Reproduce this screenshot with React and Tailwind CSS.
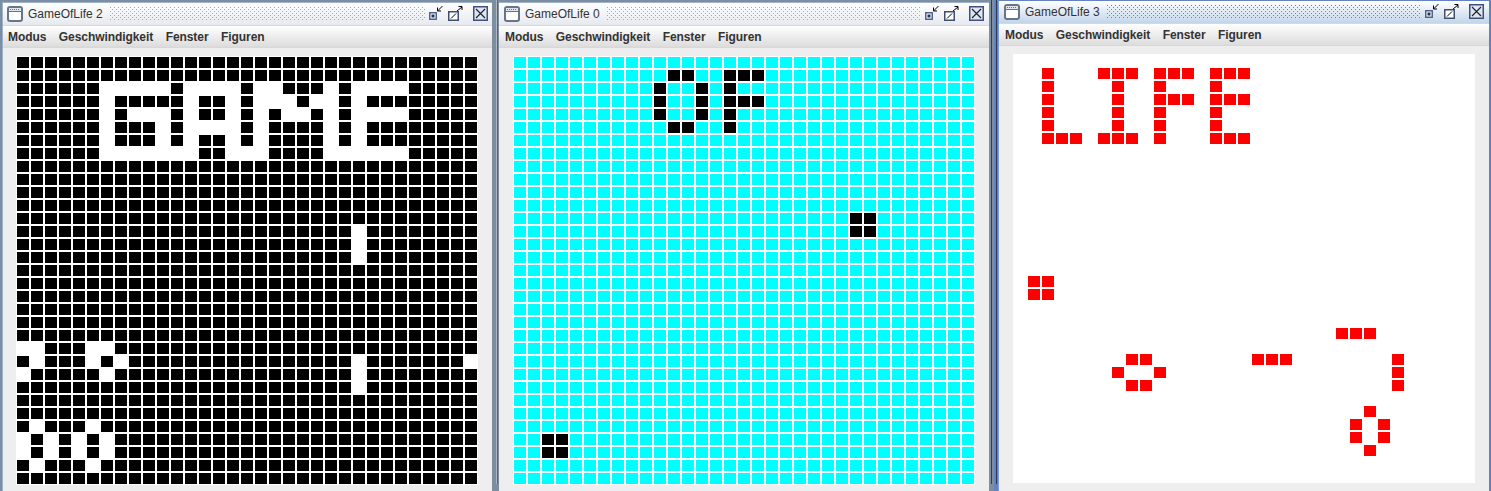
const whiteRows = {
  2: [6, 7, 8, 9, 10, 12, 13, 14, 15, 17, 18, 22, 24, 25, 26, 27],
  3: [6, 12, 15, 17, 18, 19, 21, 22, 24],
  4: [6, 8, 9, 10, 12, 15, 17, 19, 20, 22, 24, 25, 26, 27],
  5: [6, 10, 12, 13, 14, 15, 17, 22, 24],
  6: [6, 10, 12, 15, 17, 22, 24],
  7: [6, 7, 8, 9, 10, 11, 12, 15, 16, 17, 22, 23, 24, 25, 26, 27],
  13: [24],
  14: [24],
  15: [24],
  22: [0, 1, 5, 6],
  23: [1, 5, 7, 24, 32],
  24: [0, 6, 24],
  25: [24],
  28: [1, 5],
  29: [0, 2, 4, 6],
  30: [0, 2, 4, 6],
  31: [1, 5],
}

const blackRows = {
  1: [11, 12, 15, 16, 17],
  2: [10, 13, 15],
  3: [10, 13, 15, 16, 17],
  4: [10, 13, 15],
  5: [11, 12, 15],
  12: [24, 25],
  13: [24, 25],
  29: [2, 3],
  30: [2, 3],
}

const redRows = {
  1: [2, 6, 7, 8, 10, 11, 12, 14, 15, 16],
  2: [2, 7, 10, 14],
  3: [2, 7, 10, 11, 12, 14, 15, 16],
  4: [2, 7, 10, 14],
  5: [2, 7, 10, 14],
  6: [2, 3, 4, 6, 7, 8, 10, 14, 15, 16],
  17: [1, 2],
  18: [1, 2],
  21: [23, 24, 25],
  23: [8, 9, 17, 18, 19, 27],
  24: [7, 10, 27],
  25: [8, 9, 27],
  27: [25],
  28: [24, 26],
  29: [24, 26],
  30: [25],
}

const rows = Array.from({ length: 33 }, (_, i) => i)
const cols = Array.from({ length: 33 }, (_, i) => i)
const menus = ['Modus', 'Geschwindigkeit', 'Fenster', 'Figuren']

function Grid({ marked, on, off }) {
  return (
    <div className="grid w-[462px] grid-cols-[repeat(33,12px)] grid-rows-[repeat(33,11px)] gap-x-[2px] gap-y-[2px] bg-white p-px">
      {rows.map((r) =>
        cols.map((c) => (
          <div key={`${r}-${c}`} className={marked[r]?.includes(c) ? on : off} />
        )),
      )}
    </div>
  )
}

function FrameIcon() {
  return (
    <svg width="16" height="16" viewBox="0 0 16 16" className="shrink-0">
      <rect x="1" y="1" width="14" height="14" rx="2" fill="#fff" stroke="#66768a" strokeWidth="2" />
      <rect x="2" y="2" width="12" height="3" fill="#dfe5ec" />
      <path d="M3 3.5h1M5 3.5h1M7 3.5h1M9 3.5h1M11 3.5h1" stroke="#66768a" />
      <path d="M2 5.5h12" stroke="#66768a" />
    </svg>
  )
}

function Bumps({ id, color }) {
  return (
    <svg height="14" className="ml-[7px] mr-[4px] mb-[1px] min-w-0 flex-1">
      <defs>
        <pattern id={id} width="4" height="4" patternUnits="userSpaceOnUse">
          <rect x="0" y="0" width="1" height="1" fill={color} />
          <rect x="2" y="2" width="1" height="1" fill={color} />
        </pattern>
      </defs>
      <rect width="100%" height="100%" fill={`url(#${id})`} />
    </svg>
  )
}

function TitleButtons() {
  return (
    <div className="mb-[2px] flex h-[16px] shrink-0 items-start">
      <svg width="14" height="16" viewBox="0 0 14 16">
        <rect x="0.75" y="7.75" width="6.5" height="6.5" fill="#fff" stroke="#4f6390" strokeWidth="1.5" />
        <rect x="2.5" y="9.5" width="3" height="3" fill="#29364f" />
        <path d="M13.5 1 L8.5 6 M8.5 2.5 V6 H12" fill="none" stroke="#000" />
      </svg>
      <svg width="15" height="16" viewBox="0 0 15 16" className="ml-[5px]">
        <rect x="0.75" y="6.75" width="9.5" height="8.5" fill="#fff" stroke="#3f4f70" strokeWidth="1.5" />
        <path d="M3 13.5 L8 8.5" stroke="#000" />
        <path d="M9 6 L14 2 M10.5 1.5 H14 V5" fill="none" stroke="#000" />
      </svg>
      <svg width="15" height="16" viewBox="0 0 15 16" className="ml-[10px]">
        <rect x="0.75" y="1.75" width="13.5" height="13.5" fill="#dfe6f0" stroke="#3f5080" strokeWidth="1.5" />
        <path d="M3 4 L12 13 M12 4 L3 13" stroke="#1d2433" strokeWidth="1.2" />
      </svg>
    </div>
  )
}

function GameWindow({ title, panelClass, outerClass, barClass, menuClass, bumpsId, bumpsColor, children }) {
  return (
    <div className={`flex flex-col overflow-hidden bg-[#eeeeee] ${outerClass}`}>
      <div className={`flex h-[22px] shrink-0 items-center ${barClass}`}>
        <FrameIcon />
        <span className="ml-[5px] text-xs text-[#333333]">{title}</span>
        <Bumps id={bumpsId} color={bumpsColor} />
        <TitleButtons />
      </div>
      <div className={`flex h-[23px] shrink-0 items-center gap-[12.5px] border-y border-[#d8d8d8] bg-gradient-to-b from-white to-[#dcdcdc] text-xs font-bold tracking-[-0.07px] text-[#333333] ${menuClass}`}>
        {menus.map((m) => (
          <span key={m}>{m}</span>
        ))}
      </div>
      <div className={panelClass}>{children}</div>
    </div>
  )
}

export default function App() {
  return (
    <div className="flex h-[491px] w-[1491px] overflow-hidden bg-[#7d8ea1] font-['Liberation_Sans',Arial,sans-serif]">
      <div className="ml-[2px] mt-[2px] h-[489px] w-[490px] border-l border-t border-[#9fb2cc]">
        <GameWindow
          title="GameOfLife 2"
          outerClass="h-full w-full"
          barClass="bg-gradient-to-b from-white to-[#e6e9ee] pl-[4px] pr-[4px]"
          menuClass="pl-[5px]"
          bumpsId="bumps-2"
          bumpsColor="#a6a6a6"
          panelClass="pl-[13px] pt-[8px]"
        >
          <Grid marked={whiteRows} on="bg-white" off="bg-black" />
        </GameWindow>
      </div>

      <div className="flex h-[491px] w-[7px] justify-center">
        <div className="ml-[2px] h-[484px] w-[2px] bg-gradient-to-r from-[#dfe5ec] to-[#333d49]" />
      </div>

      <div className="mt-[2px] h-[489px] w-[490px] border-t border-[#9fb2cc]">
        <GameWindow
          title="GameOfLife 0"
          outerClass="h-full w-full"
          barClass="bg-gradient-to-b from-white to-[#e6e9ee] pl-[5px] pr-[5px]"
          menuClass="pl-[6px]"
          bumpsId="bumps-0"
          bumpsColor="#a6a6a6"
          panelClass="pl-[14px] pt-[8px]"
        >
          <Grid marked={blackRows} on="bg-black" off="bg-[#00ffff]" />
        </GameWindow>
      </div>

      <div className="flex h-[491px] w-[10px]">
        <div className="ml-[2px] h-[484px] w-[1px] bg-[#333d49]" />
        <div className="ml-[2px] h-[491px] w-[5px] border-r border-[#7a9ad8] bg-[#6382bf]">
          <div className="ml-[2px] h-[484px] w-px bg-[#2a3550]" />
        </div>
      </div>

      <GameWindow
        title="GameOfLife 3"
        outerClass="h-[491px] w-[492px] border-t border-r-2 border-[#6382bf]"
        barClass="bg-gradient-to-b from-white to-[#c3d5ea] pl-[5px] pr-[5px]"
        menuClass="pl-[6px]"
        bumpsId="bumps-3"
        bumpsColor="#6382bf"
        panelClass="pl-[14px] pt-[8px]"
      >
        <Grid marked={redRows} on="bg-[#ff0000]" off="bg-white" />
      </GameWindow>
    </div>
  )
}
